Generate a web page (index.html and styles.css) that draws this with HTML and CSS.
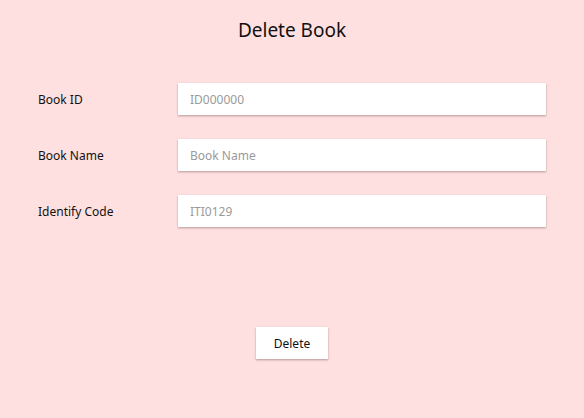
FILE: index.html
```html
<!DOCTYPE html>
<html>
<head>
<meta charset="utf-8">
<link rel="stylesheet" href="styles.css">
</head>
<body>
<div class="page">
  <h1 class="title">Delete Book</h1>
  <div class="form">
    <div class="row">
      <label class="label">Book ID</label>
      <input class="field" type="text" placeholder="ID000000">
    </div>
    <div class="row">
      <label class="label">Book Name</label>
      <input class="field" type="text" placeholder="Book Name">
    </div>
    <div class="row">
      <label class="label">Identify Code</label>
      <input class="field" type="text" placeholder="ITI0129">
    </div>
  </div>
  <div class="actions">
    <button class="btn">Delete</button>
  </div>
</div>
</body>
</html>
```
FILE: styles.css
```css
html, body {
  margin: 0;
  padding: 0;
  background: #ffe0e0;
  height: 100%;
}
body {
  font-family: "Noto Sans", "Open Sans", sans-serif;
  color: #111;
}
.page {
  padding: 0 38px;
}
.title {
  margin: 0;
  padding-top: 15px;
  height: 83px;
  box-sizing: border-box;
  text-align: center;
  font-size: 19px;
  font-weight: 400;
  line-height: 30px;
}
.form {
  display: flex;
  flex-direction: column;
  gap: 24px;
}
.row {
  display: grid;
  grid-template-columns: 140px 1fr;
  align-items: center;
}
.label {
  font-size: 12px;
  font-weight: 400;
}
.field {
  height: 32px;
  box-sizing: border-box;
  border: none;
  outline: none;
  background: #fff;
  padding: 0 12px;
  font-family: inherit;
  font-size: 12px;
  box-shadow: 0 1px 2px rgba(120, 90, 90, 0.55);
}
.field::placeholder {
  color: #9a9a9a;
}
.actions {
  display: flex;
  justify-content: center;
  margin-top: 100px;
}
.btn {
  width: 72px;
  height: 32px;
  border: none;
  background: #fff;
  font-family: inherit;
  font-size: 12px;
  font-weight: 400;
  color: #111;
  box-shadow: 0 1px 2px rgba(120, 90, 90, 0.55);
  cursor: pointer;
}
```
